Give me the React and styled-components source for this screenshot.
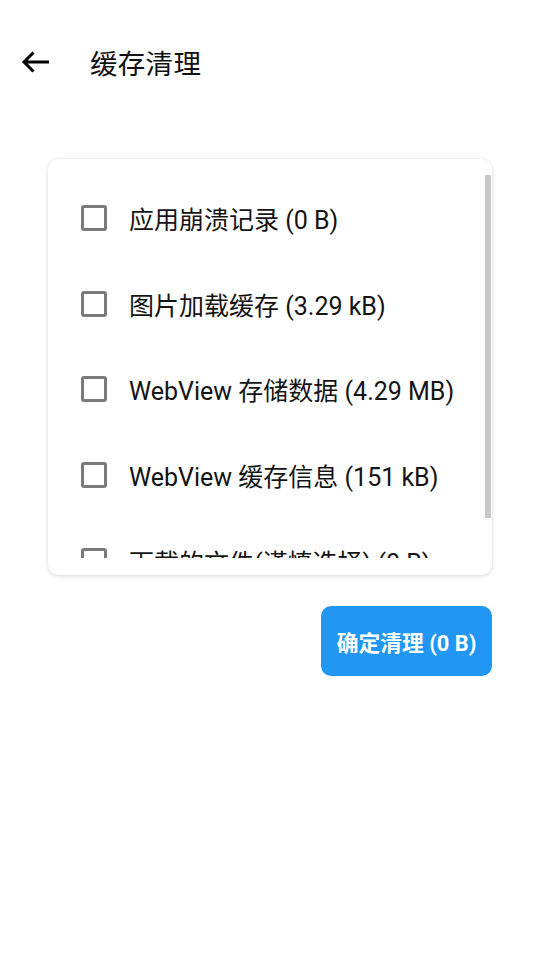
import React, { useState } from "react";
import styled, { createGlobalStyle } from "styled-components";

const GlobalStyle = createGlobalStyle`
  html, body {
    margin: 0;
    padding: 0;
    background: #ffffff;
  }
  body {
    font-family: Roboto, "Noto Sans CJK SC", sans-serif;
    color: #1a1a1a;
  }
`;

const Page = styled.div`
  width: 540px;
  min-height: 960px;
  background: #fff;
`;

const TopBar = styled.div`
  height: 124px;
  display: flex;
  align-items: center;
  padding-left: 21px;
  box-sizing: border-box;
`;

const BackButton = styled.div`
  width: 30px;
  height: 26px;
  display: flex;
  align-items: center;
  cursor: pointer;
  margin-right: 39px;
`;

const Title = styled.h1`
  margin: 0;
  font-size: 27.5px;
  font-weight: 400;
  color: #111;
  letter-spacing: 0.3px;
`;

const Body = styled.div`
  padding: 35px 48px 0;
  display: flex;
  flex-direction: column;
  align-items: flex-end;
`;

const Card = styled.div`
  position: relative;
  width: 100%;
  height: 416px;
  box-sizing: border-box;
  padding: 16px 0 17px;
  background: #fff;
  border-radius: 10px;
  box-shadow: 0 1px 4px rgba(0, 0, 0, 0.16), 0 0 1px rgba(0, 0, 0, 0.08);
`;

const ScrollArea = styled.div`
  height: 383px;
  overflow: hidden;
`;

const Thumb = styled.div`
  position: absolute;
  right: 1px;
  top: 16px;
  width: 6px;
  height: 343px;
  background: #c8c8c8;
`;

const Row = styled.label`
  height: 85.7px;
  display: flex;
  align-items: center;
  padding-left: 33px;
  cursor: pointer;
`;

const Box = styled.span`
  width: 26px;
  height: 26px;
  box-sizing: border-box;
  border: 3px solid ${(p) => (p.$checked ? "#2196f3" : "#7a7a7a")};
  background: ${(p) => (p.$checked ? "#2196f3" : "transparent")};
  border-radius: 3px;
  margin-right: 22px;
  flex-shrink: 0;
`;

const Label = styled.span`
  font-size: 25px;
  color: #141414;
  white-space: nowrap;
`;

const ConfirmButton = styled.button`
  margin-top: 31px;
  width: 171px;
  height: 70px;
  padding: 0;
  border: none;
  border-radius: 10px;
  background: #2196f3;
  color: #fff;
  font-family: Roboto, "Noto Sans CJK SC", sans-serif;
  font-size: 21.8px;
  font-weight: 700;
  cursor: pointer;
`;

const items = [
  "应用崩溃记录 (0 B)",
  "图片加载缓存 (3.29 kB)",
  "WebView 存储数据 (4.29 MB)",
  "WebView 缓存信息 (151 kB)",
  "下载的文件(谨慎选择) (0 B)",
];

export default function App() {
  const [checked, setChecked] = useState({});

  return (
    <Page>
      <GlobalStyle />
      <TopBar>
        <BackButton>
          <svg width="30" height="24" viewBox="0 0 30 24">
            <path
              d="M3 12H28M12.5 2.5L3 12l9.5 9.5"
              fill="none"
              stroke="#000"
              strokeWidth="3"
              strokeLinecap="butt"
              strokeLinejoin="miter"
            />
          </svg>
        </BackButton>
        <Title>缓存清理</Title>
      </TopBar>
      <Body>
        <Card>
          <ScrollArea>
            {items.map((t, i) => (
              <Row
                key={t}
                onClick={() => setChecked((c) => ({ ...c, [i]: !c[i] }))}
              >
                <Box $checked={!!checked[i]} />
                <Label>{t}</Label>
              </Row>
            ))}
          </ScrollArea>
          <Thumb />
        </Card>
        <ConfirmButton>确定清理 (0 B)</ConfirmButton>
      </Body>
    </Page>
  );
}
